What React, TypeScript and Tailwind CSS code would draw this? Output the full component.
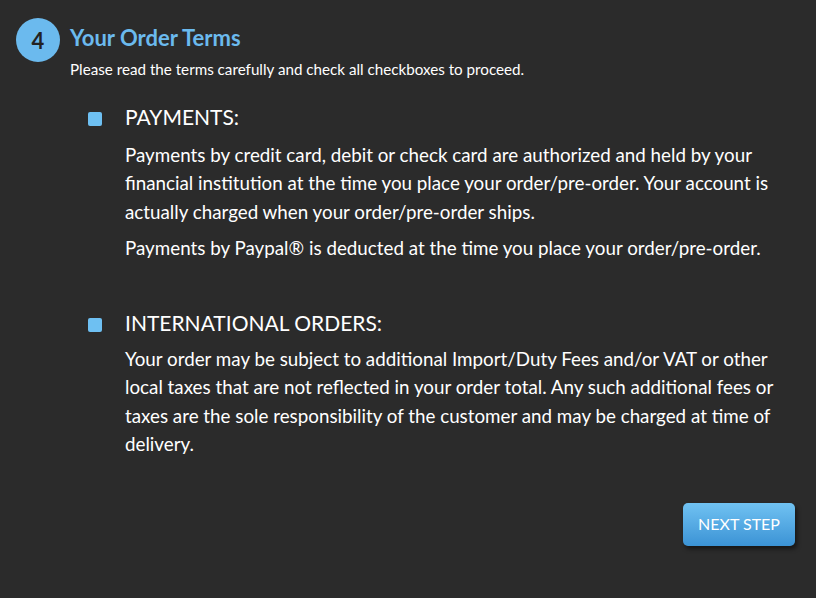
export default function App() {
  return (
    <div className="min-h-[598px] w-full bg-[#2b2b2b] font-['Lato',sans-serif] text-white">
      <div className="px-[16px] pt-[18px]">
        <div className="flex items-center gap-[10px]">
          <div className="flex h-[44px] w-[44px] items-center justify-center rounded-full bg-[#6bbaee] text-[22px] font-bold text-[#222222]">
            4
          </div>
          <h1 className="mb-[5px] text-[22px] font-bold text-[#6bbaee]">Your Order Terms</h1>
        </div>
        <p className="ml-[54px] mt-[-4px] text-[15.2px]">
          Please read the terms carefully and check all checkboxes to proceed.
        </p>
      </div>

      <div className="mt-[21px] flex flex-col gap-[45px] pl-[88px] pr-[22px]">
        <section className="flex gap-[23px]">
          <span className="mt-[10px] h-[14px] w-[14px] shrink-0 rounded-[2px] bg-[#6ec0f2]" />
          <div>
            <h2 className="text-[21px] leading-[30px]">PAYMENTS:</h2>
            <p className="mt-[9px] text-[18.8px] leading-[28.5px]">
              Payments by credit card, debit or check card are authorized and held by your financial
              institution at the time you place your order/pre-order. Your account is actually charged
              when your order/pre-order ships.
            </p>
            <p className="mt-[8px] text-[18.8px] leading-[28.5px]">
              Payments by Paypal® is deducted at the time you place your order/pre-order.
            </p>
          </div>
        </section>

        <section className="flex gap-[23px]">
          <span className="mt-[10px] h-[14px] w-[14px] shrink-0 rounded-[2px] bg-[#6ec0f2]" />
          <div>
            <h2 className="text-[21px] leading-[30px]">INTERNATIONAL ORDERS:</h2>
            <p className="mt-[7px] text-[18.8px] leading-[28.5px]">
              Your order may be subject to additional Import/Duty Fees and/or VAT or other local taxes
              that are not reflected in your order total. Any such additional fees or taxes are the sole
              responsibility of the customer and may be charged at time of delivery.
            </p>
          </div>
        </section>
      </div>

      <div className="flex justify-end pr-[21px] pt-[44px]">
        <button
          type="button"
          className="h-[43px] w-[112px] rounded-[5px] bg-gradient-to-b from-[#70c2f2] to-[#3b93d5] text-[16px] text-white shadow-[2px_3px_4px_rgba(0,0,0,0.5)]"
        >
          NEXT STEP
        </button>
      </div>
    </div>
  );
}
